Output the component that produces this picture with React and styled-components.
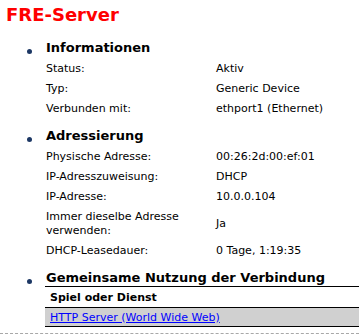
import React from "react";
import styled, { createGlobalStyle } from "styled-components";

const GlobalStyle = createGlobalStyle`
  body {
    margin: 0;
    background: #ffffff;
    font-family: Verdana, "DejaVu Sans", sans-serif;
    font-size: 11px;
    color: #000000;
  }
`;

// ganze Seite
const Page = styled.div`
  width: 359px;
  overflow: hidden;
`;

const Title = styled.h1`
  margin: 1px 0 0;
  padding-left: 6px;
  font-size: 18px;
  line-height: 27px;
  font-weight: bold;
  color: #ff0000;
`;

const Section = styled.section`
  margin-top: ${(p) => p.$top}px;
`;

const SectionHead = styled.div`
  display: flex;
  align-items: flex-start;
  padding-left: 27px;
`;

const Bullet = styled.span`
  width: 5px;
  height: 5px;
  margin-top: 10px;
  margin-right: 14px;
  border-radius: 50%;
  background: #1c3764;
  flex: none;
`;

const Heading = styled.h2`
  margin: 0;
  font-size: 13px;
  line-height: 18px;
  font-weight: bold;
`;

// Label/Wert Tabelle
const Rows = styled.div`
  display: grid;
  grid-template-columns: 170px 1fr;
  margin: 2px 0 0 46px;
`;

const Label = styled.div`
  padding: 3px 0;
  line-height: 14px;
`;

const Value = styled.div`
  padding: 3px 0;
  line-height: 14px;
  align-self: center;
`;

const ShareTable = styled.div`
  margin: -1px 0 0 45px;
  border-top: 1px solid #000000;
  border-bottom: 1px solid #000000;
`;

const ShareRow = styled.div`
  height: ${(p) => p.$h}px;
  display: flex;
  align-items: center;
  padding-left: 5px;
  font-weight: ${(p) => (p.$head ? "bold" : "normal")};
  background: ${(p) => (p.$gray ? "#d0d0d0" : "transparent")};
  border-top: ${(p) => (p.$gray ? "1px solid #000000" : "none")};
`;

const ServiceLink = styled.a`
  color: #0000ff;
  text-decoration: underline;
`;

const Dashed = styled.div`
  margin-top: 6px;
  border-top: 1px dashed #a8a8a8;
`;

const sections = [
  {
    title: "Informationen",
    top: 11,
    rows: [
      ["Status:", "Aktiv"],
      ["Typ:", "Generic Device"],
      ["Verbunden mit:", "ethport1 (Ethernet)"],
    ],
  },
  {
    title: "Adressierung",
    top: 8,
    rows: [
      ["Physische Adresse:", "00:26:2d:00:ef:01"],
      ["IP-Adresszuweisung:", "DHCP"],
      ["IP-Adresse:", "10.0.0.104"],
      ["Immer dieselbe Adresse verwenden:", "Ja"],
      ["DHCP-Leasedauer:", "0 Tage, 1:19:35"],
    ],
  },
];

const App = () => {
  return (
    <>
      <GlobalStyle />
      <Page>
        <Title>FRE-Server</Title>
        {sections.map((s) => (
          <Section key={s.title} $top={s.top}>
            <SectionHead>
              <Bullet />
              <Heading>{s.title}</Heading>
            </SectionHead>
            <Rows>
              {s.rows.map(([label, value]) => (
                <React.Fragment key={label}>
                  <Label>{label}</Label>
                  <Value>{value}</Value>
                </React.Fragment>
              ))}
            </Rows>
          </Section>
        ))}
        <Section $top={8}>
          <SectionHead>
            <Bullet />
            <Heading>Gemeinsame Nutzung der Verbindung</Heading>
          </SectionHead>
          <ShareTable>
            <ShareRow $head $h={20}>
              Spiel oder Dienst
            </ShareRow>
            <ShareRow $gray $h={18}>
              <ServiceLink href="#">HTTP Server (World Wide Web)</ServiceLink>
            </ShareRow>
          </ShareTable>
        </Section>
        <Dashed />
      </Page>
    </>
  );
};

export default App;
